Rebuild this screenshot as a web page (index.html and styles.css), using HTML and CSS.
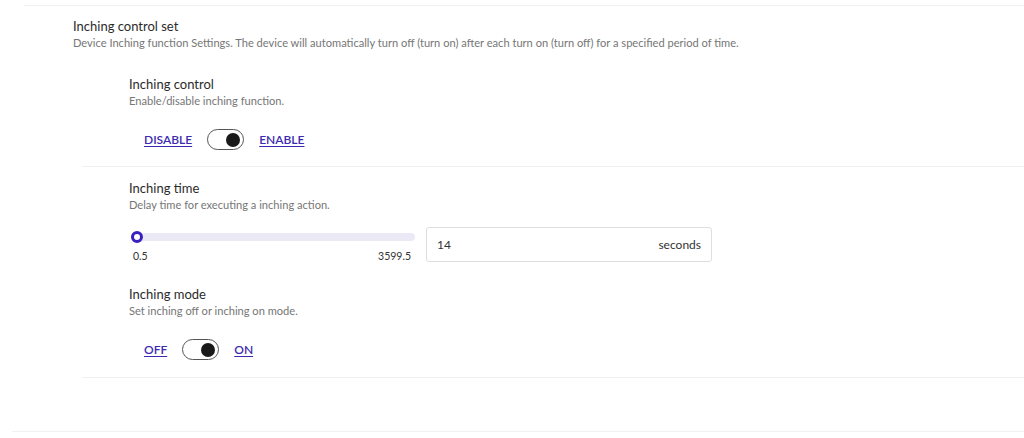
FILE: index.html
```html
<!DOCTYPE html>
<html lang="en">
<head>
<meta charset="utf-8">
<title>Inching control set</title>
<link rel="stylesheet" href="styles.css">
</head>
<body>
<div class="topline"></div>
<section class="group">
  <div class="group-head">
    <div class="title">Inching control set</div>
    <div class="desc">Device Inching function Settings. The device will automatically turn off (turn on) after each turn on (turn off) for a specified period of time.</div>
  </div>
  <div class="block block-first">
    <div class="item">
      <div class="title">Inching control</div>
      <div class="desc">Enable/disable inching function.</div>
      <div class="switch-row">
        <a class="link" href="#">DISABLE</a>
        <span class="toggle"><span class="knob"></span></span>
        <a class="link" href="#">ENABLE</a>
      </div>
    </div>
  </div>
  <div class="block block-second">
    <div class="item">
      <div class="title">Inching time</div>
      <div class="desc">Delay time for executing a inching action.</div>
      <div class="slider-row">
        <div class="slider">
          <div class="track"><span class="thumb"></span></div>
          <div class="range-labels"><span>0.5</span><span>3599.5</span></div>
        </div>
        <div class="field"><span class="value">14</span><span class="unit">seconds</span></div>
      </div>
    </div>
    <div class="item item-mode">
      <div class="title">Inching mode</div>
      <div class="desc">Set inching off or inching on mode.</div>
      <div class="switch-row">
        <a class="link" href="#">OFF</a>
        <span class="toggle"><span class="knob"></span></span>
        <a class="link" href="#">ON</a>
      </div>
    </div>
  </div>
</section>
<div class="bottomline"></div>
</body>
</html>
```

FILE: styles.css
```css
html, body {
  margin: 0;
  padding: 0;
  background: #ffffff;
}
body {
  font-family: "Lato", "Open Sans", "Liberation Sans", sans-serif;
  color: #333333;
  width: 1024px;
  height: 438px;
  overflow: hidden;
}
.topline {
  margin: 5px 0 0 24px;
  height: 1px;
  background: #f1f1f1;
}
.group-head {
  padding: 11px 0 0 73px;
}
.title {
  font-size: 13px;
  line-height: 18px;
  color: #2b2b2b;
}
.desc {
  font-size: 11.1px;
  line-height: 16px;
  color: #767676;
}
.block {
  margin-left: 82px;
  padding-left: 47px;
  border-bottom: 1px solid #f0f0f0;
}
.block-first {
  padding-top: 24px;
  padding-bottom: 16px;
}
.block-second {
  padding-top: 12px;
  padding-bottom: 17px;
}
.switch-row {
  display: flex;
  align-items: center;
  margin-top: 20px;
  padding-left: 15px;
  gap: 15px;
  height: 21px;
}
.link {
  font-size: 12px;
  font-weight: 600;
  color: #3b2bb0;
  text-decoration: underline;
  text-underline-offset: 2px;
}
.toggle {
  box-sizing: border-box;
  width: 37px;
  height: 21px;
  border: 1.5px solid #555555;
  border-radius: 11px;
  display: flex;
  align-items: center;
  justify-content: flex-end;
  padding-right: 3px;
}
.knob {
  width: 14px;
  height: 14px;
  border-radius: 50%;
  background: #1a1a1a;
}
.slider-row {
  display: flex;
  align-items: flex-start;
  margin-top: 14px;
}
.slider {
  width: 284px;
  margin-left: 2px;
  padding-top: 6px;
}
.track {
  height: 8px;
  border-radius: 4px;
  background: #ece9f6;
  display: flex;
  align-items: center;
}
.thumb {
  box-sizing: border-box;
  width: 12px;
  height: 12px;
  border-radius: 50%;
  border: 3px solid #3a1fc0;
  background: #ffffff;
}
.range-labels {
  display: flex;
  justify-content: space-between;
  padding: 8px 4px 0 2px;
  font-size: 10.5px;
  line-height: 14px;
  color: #333333;
}
.field {
  box-sizing: border-box;
  width: 286px;
  height: 35px;
  margin-left: 11px;
  border: 1px solid #dedede;
  border-radius: 3px;
  display: flex;
  align-items: center;
  justify-content: space-between;
  padding: 0 10px 0 10px;
  font-size: 12px;
  color: #333333;
}
.item-mode {
  margin-top: 22px;
}
.bottomline {
  margin: 53px 0 0 12px;
  height: 1px;
  background: #f1f1f1;
}
```
